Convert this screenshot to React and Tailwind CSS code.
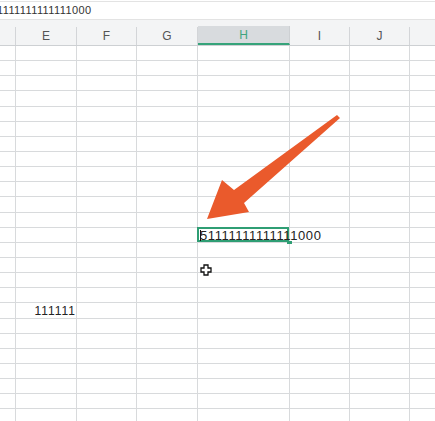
import React from "react";

const cols = [
  { name: "", w: 16 },
  { name: "E", w: 61 },
  { name: "F", w: 60 },
  { name: "G", w: 61 },
  { name: "H", w: 92, active: true },
  { name: "I", w: 60 },
  { name: "J", w: 60 },
  { name: "K", w: 60 },
];

const ROWS = 25;

function Arrow() {
  return (
    <svg
      className="absolute left-0 top-0 pointer-events-none"
      width="435"
      height="421"
      viewBox="0 0 435 421"
    >
      <polygon
        points="207,219 222,180 234,190 337,115 340,118 244,203 249,212"
        fill="#ea5a2c"
      />
    </svg>
  );
}

function PlusCursor() {
  return (
    <svg
      className="absolute left-[200px] top-[264px] pointer-events-none"
      width="12"
      height="12"
      viewBox="0 0 12 12"
    >
      <path
        d="M4 1h4v3h3v4H8v3H4V8H1V4h3z"
        fill="#fff"
        stroke="#111"
        strokeWidth="1.3"
      />
    </svg>
  );
}

export default function App() {
  return (
    <div
      className="relative w-[435px] h-[421px] overflow-hidden bg-white text-[#222]"
      style={{ fontFamily: '"Liberation Sans", Arial, sans-serif' }}
    >
      {/* formula bar */}
      <div className="h-[19px] mt-[1px] border-t border-b border-[#e3e3e3] flex items-center overflow-hidden">
        <span className="text-[11px] tracking-[0.4px] -ml-[3px] whitespace-nowrap text-[#333]">
          1111111111111000
        </span>
      </div>

      {/* column headers */}
      <div className="h-[26px] bg-[#f3f4f5] border-b border-[#cdd0d3] flex items-end">
        {cols.map((c, i) =>
          c.active ? (
            <div
              key={i}
              style={{ width: c.w }}
              className="shrink-0 h-[19px] bg-[#d8dbde] border-b-2 border-[#36a37a] border-r border-r-[#cdd0d3] flex items-center justify-center text-[12px] text-[#3fa57f]"
            >
              {c.name}
            </div>
          ) : (
            <div
              key={i}
              style={{ width: c.w }}
              className="shrink-0 h-[18px] border-r border-[#d3d5d8] flex items-center justify-center text-[12px] text-[#555]"
            >
              {c.name}
            </div>
          )
        )}
      </div>

      {/* grid body */}
      <div className="grid grid-cols-[16px_61px_60px_61px_92px_60px_60px_60px] auto-rows-[15.15px]">
        {Array.from({ length: ROWS }).map((_, r) =>
          cols.map((c, ci) => {
            const selected = r === 12 && ci === 4;
            const eCell = r === 17 && ci === 1;
            return (
              <div
                key={r + "-" + ci}
                className="relative border-r border-b border-[#d8dadc]"
              >
                {selected && (
                  <>
                    <div className="absolute -left-[1px] -top-[1px] right-0 bottom-0 border-2 border-[#2f9e74] z-10" />
                    <div className="absolute -right-[3px] -bottom-[2px] w-[5px] h-[3px] bg-[#2f9e74] z-20" />
                    <div className="absolute left-[2px] top-[1px] h-[13px] flex items-center whitespace-nowrap text-[13px] tracking-[0.6px] leading-none z-20">
                      <span className="w-px h-[11px] bg-[#111] mr-[-1px]" />
                      51111111111111000
                    </div>
                  </>
                )}
                {eCell && (
                  <div className="absolute right-0 bottom-0 text-[12px] tracking-[1px] leading-[13px] whitespace-nowrap">
                    111111
                  </div>
                )}
              </div>
            );
          })
        )}
      </div>

      <Arrow />
      <PlusCursor />
    </div>
  );
}
